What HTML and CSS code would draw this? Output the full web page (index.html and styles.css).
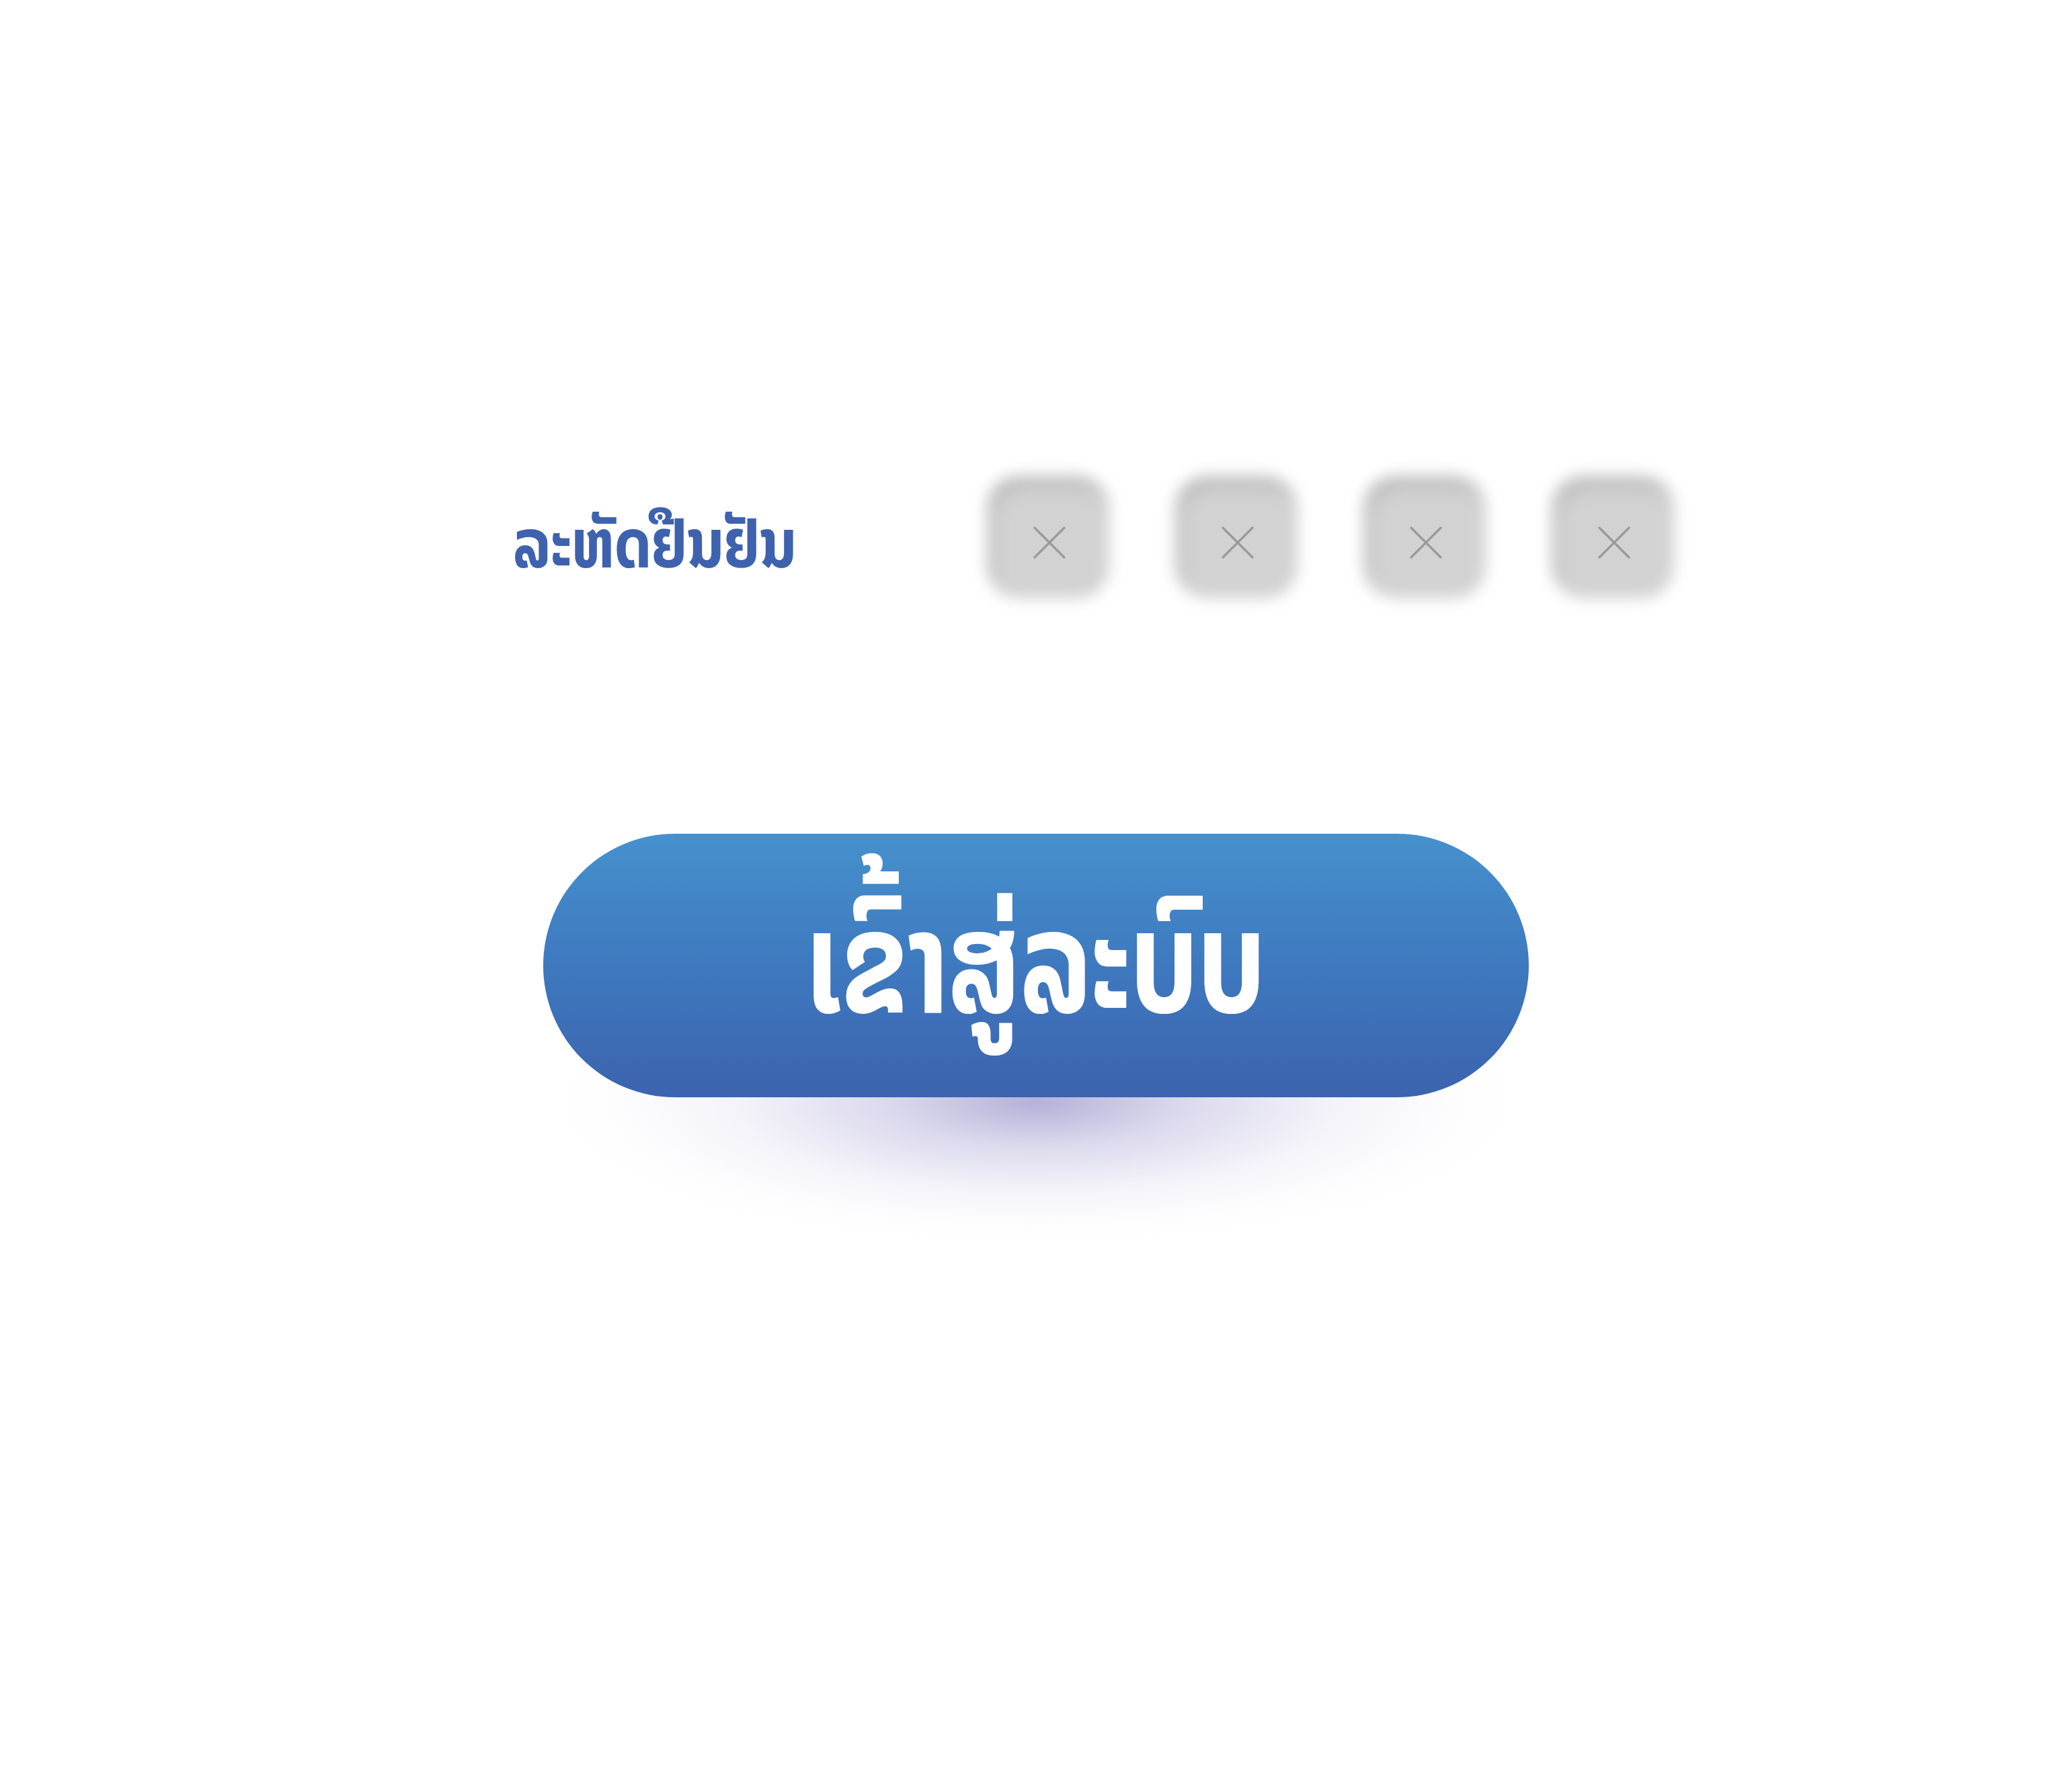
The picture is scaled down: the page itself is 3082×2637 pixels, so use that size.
FILE: index.html
```html
<!DOCTYPE html>
<html lang="lo">
<head>
<meta charset="utf-8">
<title>ເຂົ້າສູ່ລະບົບ</title>
<link rel="stylesheet" href="styles.css">
</head>
<body>
<main class="page">
  <section class="pin-row">
    <div class="pin-label"><span class="pin-label-text">ລະຫັດຢືນຢັນ</span></div>
    <div class="pin-boxes">
      <div class="pin-box"><svg class="pin-x" viewBox="0 0 48 48"><path d="M2 2 L46 46 M46 2 L2 46"/></svg></div>
      <div class="pin-box"><svg class="pin-x" viewBox="0 0 48 48"><path d="M2 2 L46 46 M46 2 L2 46"/></svg></div>
      <div class="pin-box"><svg class="pin-x" viewBox="0 0 48 48"><path d="M2 2 L46 46 M46 2 L2 46"/></svg></div>
      <div class="pin-box"><svg class="pin-x" viewBox="0 0 48 48"><path d="M2 2 L46 46 M46 2 L2 46"/></svg></div>
    </div>
  </section>
  <div class="btn-wrap">
    <button class="login-btn"><span class="login-text">ເຂົ້າສູ່ລະບົບ</span></button>
  </div>
</main>
</body>
</html>
```
FILE: styles.css
```css
html, body {
  margin: 0;
  padding: 0;
  background: #ffffff;
}
.page {
  width: 3082px;
  height: 2637px;
  padding-top: 712px;
  box-sizing: border-box;
  font-family: "Noto Sans Lao", "Noto Sans Lao UI", "DejaVu Sans", sans-serif;
}
.pin-row {
  display: flex;
  align-items: center;
  margin-left: 763px;
  height: 190px;
}
.pin-label {
  width: 703px;
  color: #3f62ae;
  font-weight: 700;
  font-size: 102px;
  line-height: 1;
}
.pin-label-text {
  display: inline-block;
  transform: scaleX(0.86);
  transform-origin: left center;
  white-space: nowrap;
}
.pin-boxes {
  display: flex;
  gap: 90px;
}
.pin-box {
  position: relative;
  width: 190px;
  height: 190px;
  display: flex;
  align-items: center;
  justify-content: center;
}
.pin-box::before {
  content: "";
  position: absolute;
  top: -4px;
  bottom: 12px;
  left: 2px;
  right: 6px;
  border-radius: 48px;
  background: #d2d2d2;
  box-shadow: inset 8px 16px 16px rgba(0, 0, 0, 0.12);
  filter: blur(11px);
}
.pin-x {
  position: relative;
  width: 48px;
  height: 48px;
}
.pin-x path {
  stroke: #999999;
  stroke-width: 3.2;
  fill: none;
  stroke-linecap: round;
}
.btn-wrap {
  position: relative;
  margin-top: 338px;
  display: flex;
  justify-content: center;
}
.btn-wrap::before {
  content: "";
  position: absolute;
  left: 50%;
  top: 190px;
  width: 1440px;
  height: 420px;
  transform: translateX(-50%);
  background: radial-gradient(ellipse closest-side at 50% 50%,
    rgba(120, 112, 185, 0.55) 0%,
    rgba(135, 128, 195, 0.30) 30%,
    rgba(165, 158, 212, 0.12) 62%,
    rgba(200, 196, 230, 0.04) 85%,
    rgba(255, 255, 255, 0) 100%);
}
.login-btn {
  position: relative;
  width: 1466px;
  height: 392px;
  border: none;
  border-radius: 196px;
  background: linear-gradient(180deg, #4691cd 0%, #3e79bf 50%, #3c63ae 100%);
  color: #ffffff;
  font-family: "Noto Sans Lao", "Noto Sans Lao UI", "DejaVu Sans", sans-serif;
  font-weight: 700;
  font-size: 214px;
  line-height: 1;
  padding: 0 0 14px 0;
  display: flex;
  align-items: center;
  justify-content: center;
}
.login-text {
  display: inline-block;
  transform: scaleX(0.77);
  white-space: nowrap;
}
```
